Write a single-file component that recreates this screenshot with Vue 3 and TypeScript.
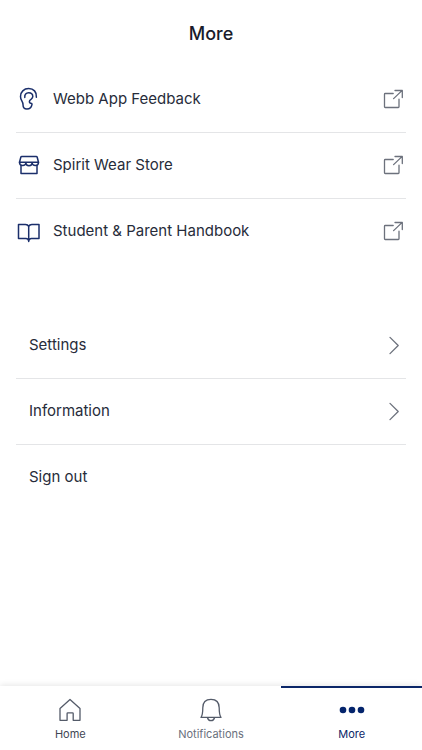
<script setup lang="ts">
interface ExternalLink {
  label: string
  icon: 'ear' | 'store' | 'book'
}

interface Tab {
  label: string
  icon: 'home' | 'bell' | 'dots'
}

const links: ExternalLink[] = [
  { label: 'Webb App Feedback', icon: 'ear' },
  { label: 'Spirit Wear Store', icon: 'store' },
  { label: 'Student & Parent Handbook', icon: 'book' },
]

const pages: string[] = ['Settings', 'Information']

const tabs: Tab[] = [
  { label: 'Home', icon: 'home' },
  { label: 'Notifications', icon: 'bell' },
  { label: 'More', icon: 'dots' },
]

const activeTab = 'More'
</script>

<template>
  <div class="screen">
    <header class="header">
      <h1 class="title">More</h1>
    </header>

    <main class="content">
      <ul class="list">
        <li v-for="link in links" :key="link.label" class="item">
          <a href="#" class="row">
            <svg class="icon brand" viewBox="0 0 25 25" aria-hidden="true">
              <template v-if="link.icon === 'ear'">
                <path d="M20.4 11.2C20.8 5.8 17.6 2.6 12.7 2.6C7.8 2.6 4.5 6 4.5 10.4C4.5 14.4 7 15 7 18.4C7 21.4 8.5 23 10.9 23C13.6 23 15.5 21.4 16 18.4" />
                <path d="M8.8 11.4C8.4 8.6 10.2 6.8 12.6 6.8C15 6.8 16.8 8.4 16.8 10.6C16.8 13.6 13.4 13 13.4 15.6C13.4 17 14.4 17.6 15.8 17.6" />
              </template>
              <template v-else-if="link.icon === 'store'">
                <path d="M5.8 4.5H20.2Q21 4.5 21.2 5.3L22.5 10.2H3.5L4.8 5.3Q5 4.5 5.8 4.5Z" />
                <path d="M3.5 10.2C3.5 14.6 9.8 14.6 9.8 10.8C9.8 14.6 16.2 14.6 16.2 10.8C16.2 14.6 22.5 14.6 22.5 10.2" />
                <path d="M5 13.4V21.5H21V13.4" />
              </template>
              <path v-else d="M12.7 8.5C12.2 7.2 11.2 6.5 9.5 6.5H2.5V20.5H10C11.5 20.5 12.4 21.3 12.7 22.8C13 21.3 13.9 20.5 15.4 20.5H23V6.5H15.9C14.2 6.5 13.2 7.2 12.7 8.5ZV23.5" />
            </svg>
            <span class="label">{{ link.label }}</span>
            <svg class="icon muted" viewBox="0 0 25 25" aria-hidden="true">
              <path d="M12.2 7.5H4.2Q3.5 7.5 3.5 8.2V20.8Q3.5 21.5 4.2 21.5H17.3Q18 21.5 18 20.8V13.2" />
              <path d="M12.6 12.6L21.2 4.4M14 4.5H21.3V11.6" />
            </svg>
          </a>
        </li>
      </ul>

      <ul class="list">
        <li v-for="page in pages" :key="page" class="item">
          <a href="#" class="row inset">
            <span class="label">{{ page }}</span>
            <svg class="icon muted" viewBox="0 0 25 25" aria-hidden="true">
              <path d="M9 5.4L17.2 13.5L9 21.6" />
            </svg>
          </a>
        </li>
        <li class="item">
          <button type="button" class="row inset">
            <span class="label">Sign out</span>
          </button>
        </li>
      </ul>
    </main>

    <nav class="tabs">
      <a
        v-for="tab in tabs"
        :key="tab.label"
        href="#"
        class="tab"
        :class="[tab.icon, { active: tab.label === activeTab }]"
        :aria-current="tab.label === activeTab ? 'page' : undefined"
      >
        <svg class="tab-icon" viewBox="0 0 26 24" aria-hidden="true">
          <path v-if="tab.icon === 'home'" d="M3 10.5L13 1.4L23 10.5V22.3H16.2V15.5Q16.2 14.8 15.5 14.8H10.8Q10.1 14.8 10.1 15.5V22.3H3Z" />
          <template v-else-if="tab.icon === 'bell'">
            <path d="M3 19.4C4.4 17.5 4.8 14.5 4.8 9.8C4.8 4.4 8 1.4 13 1.4C18 1.4 21.2 4.4 21.2 9.8C21.2 14.5 21.6 17.5 23 19.4Z" />
            <path d="M9.4 19.5C9.9 21.6 11.2 22.6 13 22.6C14.8 22.6 16.1 21.6 16.6 19.5" />
          </template>
          <template v-else>
            <circle cx="4" cy="12" r="3.3" />
            <circle cx="13" cy="12" r="3.3" />
            <circle cx="22" cy="12" r="3.3" />
          </template>
        </svg>
        <span>{{ tab.label }}</span>
      </a>
    </nav>
  </div>
</template>

<style>
body {
  margin: 0;
  background: #fff;
}
</style>

<style scoped>
.screen {
  display: flex;
  flex-direction: column;
  min-height: 100vh;
  background: #fff;
  color: #272c3a;
  font-family: Inter, 'Liberation Sans', sans-serif;
}

.header {
  display: flex;
  align-items: center;
  justify-content: center;
  height: 67px;
}

.title {
  margin: 0;
  color: #191b2b;
  font-size: 18px;
  font-weight: 500;
  line-height: 25px;
}

.content {
  display: flex;
  flex: 1;
  flex-direction: column;
  gap: 48px;
  padding: 0 16px;
}

.list {
  margin: 0;
  padding: 0;
  list-style: none;
}

.item {
  border-bottom: 1px solid #e4e5e7;
}

.item:last-child {
  border-bottom-color: transparent;
}

.row {
  display: flex;
  align-items: center;
  gap: 12px;
  box-sizing: border-box;
  width: 100%;
  height: 65px;
  padding: 0 0 2px;
  border: 0;
  background: none;
  color: inherit;
  font: inherit;
  font-size: 15px;
  line-height: 25px;
  text-align: left;
  text-decoration: none;
}

.inset {
  padding-left: 13px;
}

.label {
  flex: 1;
}

.icon {
  flex: none;
  width: 25px;
  height: 25px;
  fill: none;
  stroke-width: 1.3;
  stroke-linecap: round;
  stroke-linejoin: round;
}

.brand {
  stroke: #1b2f6b;
  stroke-width: 1.5;
}

.muted {
  stroke: #6c717c;
}

.tabs {
  display: grid;
  grid-template-columns: repeat(3, 1fr);
  background: #fff;
  box-shadow: 0 -1px 6px rgba(0, 0, 0, 0.1);
}

.tab {
  display: flex;
  flex-direction: column;
  align-items: center;
  gap: 4px;
  padding: 10px 0 8px;
  border-top: 2px solid transparent;
  color: #3f4654;
  font-size: 11px;
  line-height: 16px;
  text-decoration: none;
}

.bell {
  color: #6a707d;
}

.active {
  border-top-color: #0b2668;
  color: #0b2668;
}

.tab-icon {
  width: 26px;
  height: 24px;
  fill: none;
  stroke: #545b69;
  stroke-width: 1.3;
  stroke-linejoin: round;
}

.active .tab-icon {
  fill: #04246c;
  stroke: none;
}
</style>
